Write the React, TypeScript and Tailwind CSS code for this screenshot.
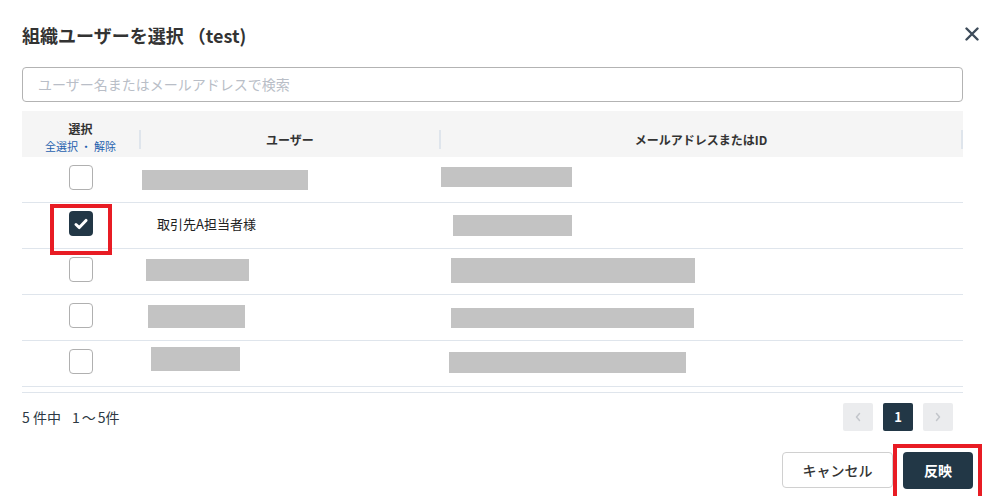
import React from "react";

type Bar = { ml: number; mt: number; w: number; h: number };
type Row = { checked: boolean; user?: Bar; name?: string; mail: Bar };

const rows: Row[] = [
  { checked: false, user: { ml: 2, mt: 13, w: 166, h: 20 }, mail: { ml: 1, mt: 10, w: 131, h: 20 } },
  { checked: true, name: "取引先A担当者様", mail: { ml: 13, mt: 12, w: 119, h: 21 } },
  { checked: false, user: { ml: 6, mt: 10, w: 103, h: 22 }, mail: { ml: 11, mt: 9, w: 244, h: 25 } },
  { checked: false, user: { ml: 8, mt: 10, w: 97, h: 23 }, mail: { ml: 11, mt: 13, w: 243, h: 20 } },
  { checked: false, user: { ml: 11, mt: 6, w: 89, h: 24 }, mail: { ml: 9, mt: 11, w: 237, h: 21 } },
];

function GrayBar({ b }: { b: Bar }) {
  return (
    <div
      className="bg-[#c3c3c3]"
      style={{ marginLeft: b.ml, marginTop: b.mt, width: b.w, height: b.h }}
    />
  );
}

function Checkbox({ checked }: { checked: boolean }) {
  if (checked) {
    return (
      <div className="relative">
        <div className="w-[24px] h-[25px] rounded-[4px] bg-[#223746] flex items-center justify-center">
          <svg width="14" height="12" viewBox="0 0 14 12" fill="none">
            <path d="M2 6.5 L5.3 9.6 L12 2.4" stroke="#ffffff" strokeWidth="2.9" strokeLinecap="round" strokeLinejoin="round" />
          </svg>
        </div>
        <div className="absolute left-[-19px] right-[-19px] top-[-7px] bottom-[-7px] border-[4px] border-[#e81c24] pointer-events-none" />
      </div>
    );
  }
  return <div className="w-[24px] h-[25px] rounded-[4px] border border-[#b0b0b0] bg-white" />;
}

export default function App() {
  return (
    <div
      className="relative w-[1002px] h-[496px] bg-white overflow-hidden text-[#333333]"
      style={{ fontFamily: '"Noto Sans CJK JP", "Noto Sans", sans-serif' }}
    >
      <div className="flex items-center justify-between pl-[22px] pr-[23px] pt-[22px]">
        <div className="text-[18px] leading-[26px] font-bold text-[#333333]">組織ユーザーを選択 （test)</div>
        <svg width="14" height="14" viewBox="0 0 14 14" className="mt-[-2px]">
          <path d="M1.5 1.5 L12.5 12.5 M12.5 1.5 L1.5 12.5" stroke="#3e4c5a" strokeWidth="2.4" strokeLinecap="round" />
        </svg>
      </div>

      <div className="pl-[22px] mt-[19px]">
        <div className="w-[941px] h-[35px] border border-[#b3b3b3] rounded-[4px] flex items-center pl-[15px]">
          <span className="text-[14px] text-[#b9bec7]">ユーザー名またはメールアドレスで検索</span>
        </div>
      </div>

      <div className="ml-[22px] mt-[9px] w-[941px]">
        <div className="h-[46px] bg-[#f5f5f5] flex">
          <div className="w-[117px] flex flex-col items-center pt-[10px]">
            <div className="text-[12px] leading-[16px] font-bold text-[#333333]">選択</div>
            <div className="text-[11px] leading-[16px] mt-[1px] text-[#1e5fae]">全選択 ・ 解除</div>
          </div>
          <div className="w-[2px] h-[19px] mt-[19px] bg-[#dfe5ec]" />
          <div className="w-[298px] flex items-center justify-center pt-[12px] text-[12px] font-bold text-[#333333]">ユーザー</div>
          <div className="w-[2px] h-[19px] mt-[19px] bg-[#dfe5ec]" />
          <div className="w-[520px] flex items-center justify-center pt-[12px] text-[12px] font-bold text-[#333333]">メールアドレスまたはID</div>
          <div className="w-[2px] h-[19px] mt-[19px] bg-[#dfe5ec]" />
        </div>

        <div className="pb-[5px] border-b border-[#dfe5ec]">
          {rows.map((r, i) => (
            <div key={i} className="h-[46px] flex border-b border-[#dfe5ec]">
              <div className="w-[118px] flex justify-center pt-[8px]">
                <Checkbox checked={r.checked} />
              </div>
              <div className="w-[300px] flex items-start">
                {r.user ? (
                  <GrayBar b={r.user} />
                ) : (
                  <div className="ml-[17px] mt-[11px] text-[13px] leading-[20px] text-[#222222]">{r.name}</div>
                )}
              </div>
              <div className="flex-1 flex items-start">
                <GrayBar b={r.mail} />
              </div>
            </div>
          ))}
        </div>

        <div className="flex items-center justify-between mt-[10px] pr-[10px] h-[28px]">
          <div className="flex items-center text-[14px] text-[#2d3944]">
            <span>5 件中</span>
            <span className="ml-[11px]">1</span>
            <span className="ml-[2px]">～</span>
            <span className="ml-[2px]">5件</span>
          </div>
          <div className="flex gap-[10px]">
            <div className="w-[30px] h-[28px] rounded-[2px] bg-[#ebecee] flex items-center justify-center">
              <svg width="8" height="10" viewBox="0 0 8 10">
                <path d="M5.5 1.5 L2.5 5 L5.5 8.5" stroke="#c3c6cb" strokeWidth="1.5" fill="none" strokeLinecap="round" strokeLinejoin="round" />
              </svg>
            </div>
            <div className="w-[30px] h-[28px] rounded-[2px] bg-[#223746] flex items-center justify-center text-white text-[13px] font-bold">1</div>
            <div className="w-[30px] h-[28px] rounded-[2px] bg-[#ebecee] flex items-center justify-center">
              <svg width="8" height="10" viewBox="0 0 8 10">
                <path d="M2.5 1.5 L5.5 5 L2.5 8.5" stroke="#c3c6cb" strokeWidth="1.5" fill="none" strokeLinecap="round" strokeLinejoin="round" />
              </svg>
            </div>
          </div>
        </div>
      </div>

      <div className="flex justify-end gap-[10px] pr-[29px] mt-[21px]">
        <div className="w-[111px] h-[36px] rounded-[4px] border border-[#d0d0d0] bg-white flex items-center justify-center text-[14px] font-medium text-[#333333]">
          キャンセル
        </div>
        <div className="relative">
          <div className="w-[70px] h-[37px] rounded-[4px] bg-[#223746] flex items-center justify-center text-[14px] font-bold text-white">
            反映
          </div>
          <div className="absolute left-[-10px] right-[-9px] top-[-8px] bottom-[-14px] border-[4px] border-[#e81c24] pointer-events-none" />
        </div>
      </div>
    </div>
  );
}
